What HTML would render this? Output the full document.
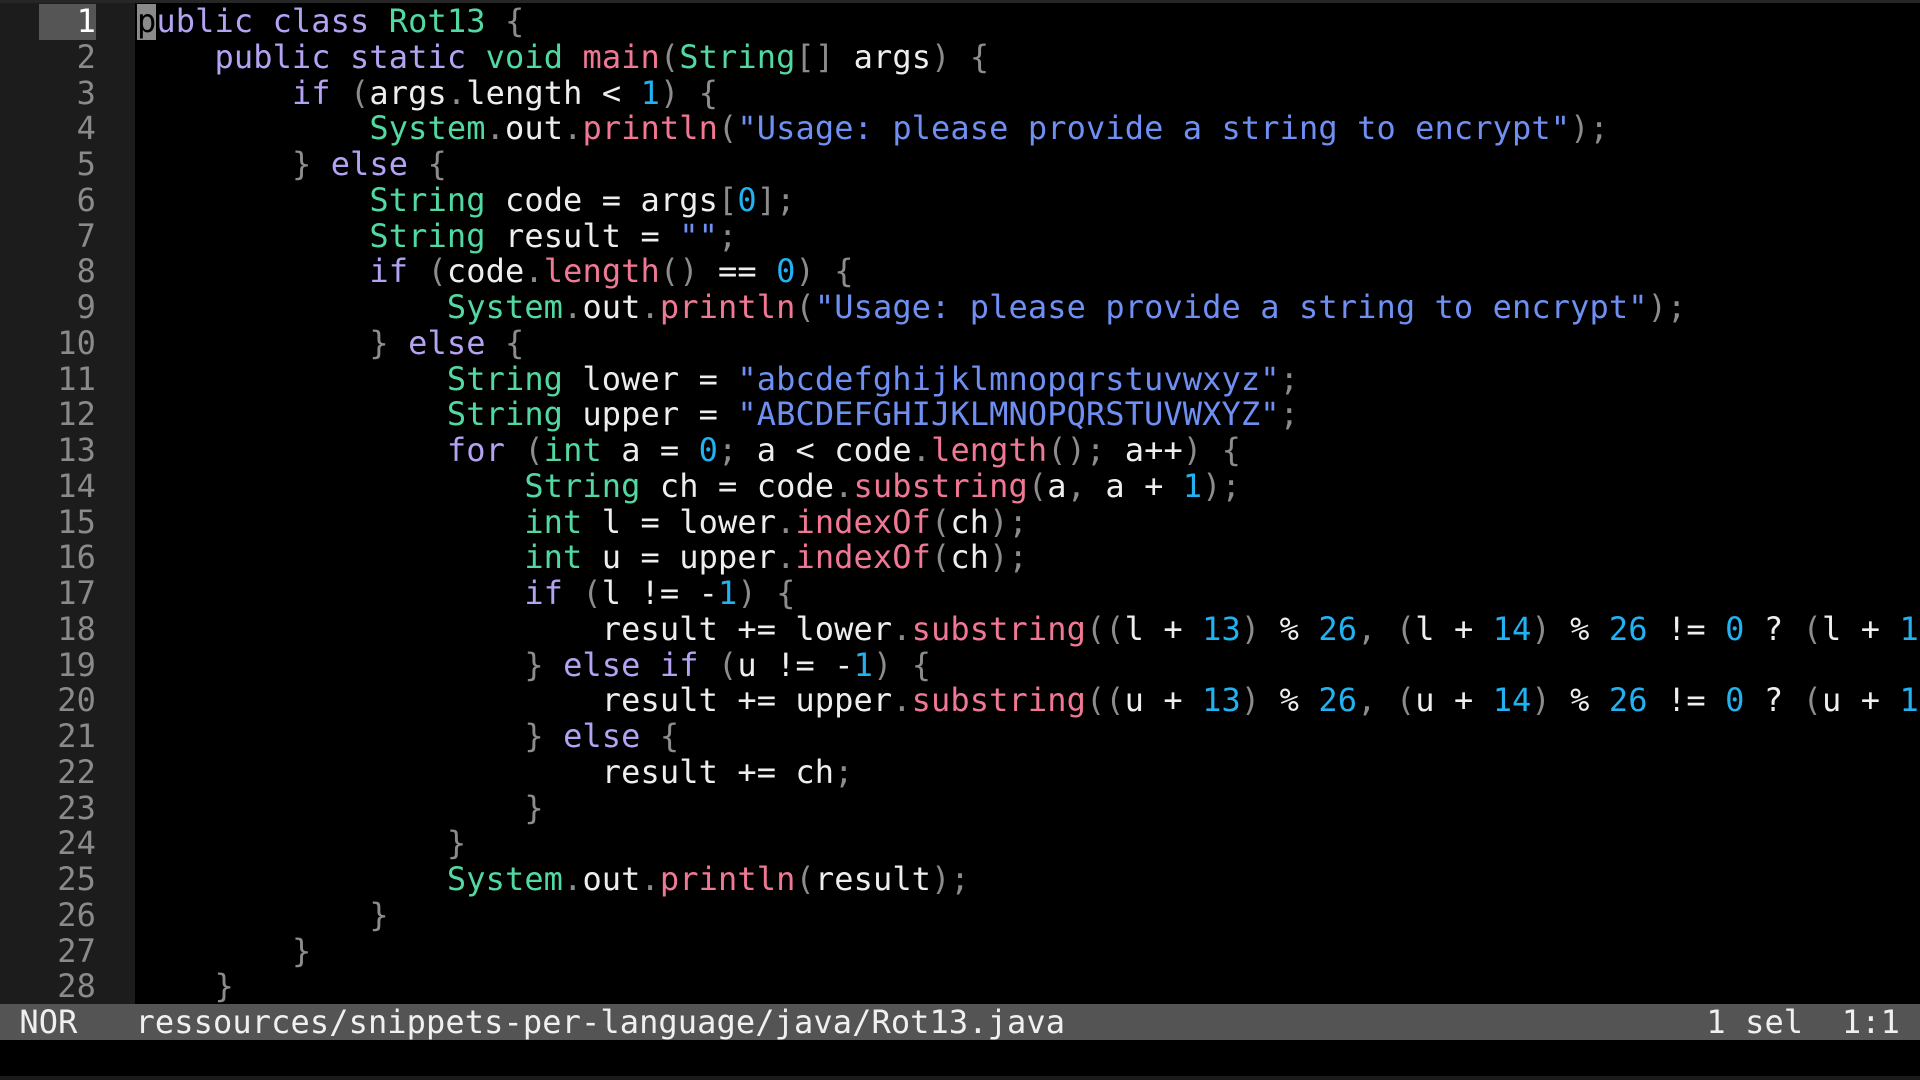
<!DOCTYPE html>
<html><head><meta charset="utf-8"><style>
html,body{margin:0;padding:0;background:#000;width:1920px;height:1080px;overflow:hidden}
body{font-family:"DejaVu Sans Mono","Liberation Mono",monospace;font-size:32px;letter-spacing:0.1px;position:relative}
.top{position:absolute;left:0;top:0;width:1920px;height:3px;background:#262626}
.gut{position:absolute;left:0;top:3px;width:135px;height:1001px;background:#1c1c1c}
.nums{position:absolute;left:0;top:4px;width:96px;text-align:right;color:#8a8a8a;line-height:35.75px;white-space:pre}
.cur{position:absolute;left:39px;top:4px;width:57px;height:35.75px;background:#555}
.nums .c{color:#fff}
.code{position:absolute;left:137px;top:4px;width:1783px;overflow:hidden;line-height:35.75px;white-space:pre;color:#eee}
.k{color:#b4a2f2}.t{color:#52d9a2}.m{color:#f07894}.s{color:#6f8ff2}.n{color:#22b2f2}.p{color:#8c8c8c}
.cursor{background:#8a8a8a;color:#000}
.status{position:absolute;left:0;top:1004px;width:1920px;height:36px;background:#545454;color:#f0f0f0;line-height:36px;white-space:pre}
.bot{position:absolute;left:0;top:1076px;width:1920px;height:4px;background:#1a1a1a}
</style></head><body>
<div class="top"></div>
<div class="gut"></div>
<div class="cur"></div>
<div class="nums"><span class="c">1</span>
2
3
4
5
6
7
8
9
10
11
12
13
14
15
16
17
18
19
20
21
22
23
24
25
26
27
28</div>
<div class="code"><span class="k"><span class="cursor">p</span>ublic class</span> <span class="t">Rot13</span> <span class="p">{</span>
    <span class="k">public static</span> <span class="t">void</span> <span class="m">main</span><span class="p">(</span><span class="t">String</span><span class="p">[]</span> args<span class="p">)</span> <span class="p">{</span>
        <span class="k">if</span> <span class="p">(</span>args<span class="p">.</span>length &lt; <span class="n">1</span><span class="p">)</span> <span class="p">{</span>
            <span class="t">System</span><span class="p">.</span>out<span class="p">.</span><span class="m">println</span><span class="p">(</span><span class="s">"Usage: please provide a string to encrypt"</span><span class="p">);</span>
        <span class="p">}</span> <span class="k">else</span> <span class="p">{</span>
            <span class="t">String</span> code = args<span class="p">[</span><span class="n">0</span><span class="p">];</span>
            <span class="t">String</span> result = <span class="s">""</span><span class="p">;</span>
            <span class="k">if</span> <span class="p">(</span>code<span class="p">.</span><span class="m">length</span><span class="p">()</span> == <span class="n">0</span><span class="p">)</span> <span class="p">{</span>
                <span class="t">System</span><span class="p">.</span>out<span class="p">.</span><span class="m">println</span><span class="p">(</span><span class="s">"Usage: please provide a string to encrypt"</span><span class="p">);</span>
            <span class="p">}</span> <span class="k">else</span> <span class="p">{</span>
                <span class="t">String</span> lower = <span class="s">"abcdefghijklmnopqrstuvwxyz"</span><span class="p">;</span>
                <span class="t">String</span> upper = <span class="s">"ABCDEFGHIJKLMNOPQRSTUVWXYZ"</span><span class="p">;</span>
                <span class="k">for</span> <span class="p">(</span><span class="t">int</span> a = <span class="n">0</span><span class="p">;</span> a &lt; code<span class="p">.</span><span class="m">length</span><span class="p">();</span> a++<span class="p">)</span> <span class="p">{</span>
                    <span class="t">String</span> ch = code<span class="p">.</span><span class="m">substring</span><span class="p">(</span>a<span class="p">,</span> a + <span class="n">1</span><span class="p">);</span>
                    <span class="t">int</span> l = lower<span class="p">.</span><span class="m">indexOf</span><span class="p">(</span>ch<span class="p">);</span>
                    <span class="t">int</span> u = upper<span class="p">.</span><span class="m">indexOf</span><span class="p">(</span>ch<span class="p">);</span>
                    <span class="k">if</span> <span class="p">(</span>l != -<span class="n">1</span><span class="p">)</span> <span class="p">{</span>
                        result += lower<span class="p">.</span><span class="m">substring</span><span class="p">((</span>l + <span class="n">13</span><span class="p">)</span> % <span class="n">26</span><span class="p">,</span> <span class="p">(</span>l + <span class="n">14</span><span class="p">)</span> % <span class="n">26</span> != <span class="n">0</span> ? <span class="p">(</span>l + <span class="n">14</span><span class="p">)</span> % <span class="n">26</span> : <span class="n">26</span><span class="p">);</span>
                    <span class="p">}</span> <span class="k">else if</span> <span class="p">(</span>u != -<span class="n">1</span><span class="p">)</span> <span class="p">{</span>
                        result += upper<span class="p">.</span><span class="m">substring</span><span class="p">((</span>u + <span class="n">13</span><span class="p">)</span> % <span class="n">26</span><span class="p">,</span> <span class="p">(</span>u + <span class="n">14</span><span class="p">)</span> % <span class="n">26</span> != <span class="n">0</span> ? <span class="p">(</span>u + <span class="n">14</span><span class="p">)</span> % <span class="n">26</span> : <span class="n">26</span><span class="p">);</span>
                    <span class="p">}</span> <span class="k">else</span> <span class="p">{</span>
                        result += ch<span class="p">;</span>
                    <span class="p">}</span>
                <span class="p">}</span>
                <span class="t">System</span><span class="p">.</span>out<span class="p">.</span><span class="m">println</span><span class="p">(</span>result<span class="p">);</span>
            <span class="p">}</span>
        <span class="p">}</span>
    <span class="p">}</span></div>
<div class="status"> NOR   ressources/snippets-per-language/java/Rot13.java<span style="position:absolute;right:20px;top:0">1 sel  1:1</span></div>
<div class="bot"></div>
</body></html>
